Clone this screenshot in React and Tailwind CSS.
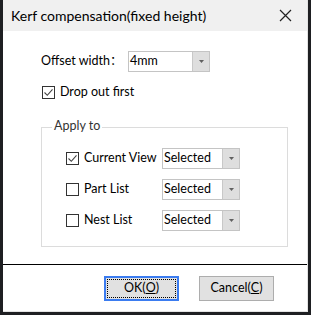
import React from "react";

const font = { fontFamily: 'Lato, "Noto Sans CJK SC", sans-serif' };

function Check({ checked }) {
  return (
    <div className="w-[13px] h-[13px] border border-[#333333] bg-white flex items-center justify-center shrink-0">
      {checked && (
        <svg width="11" height="11" viewBox="0 0 11 11">
          <path d="M1.5 5.5 L4.3 8.3 L9.5 2.3" fill="none" stroke="#444444" strokeWidth="1.1" />
        </svg>
      )}
    </div>
  );
}

function Combo({ value, w }) {
  return (
    <div className={`${w} h-[21px] border border-[#c4c4c4] bg-white flex shrink-0`}>
      <div className="flex-1 flex items-center pl-[1px] text-[12.5px] text-black leading-none whitespace-nowrap">{value}</div>
      <div className="w-[17px] bg-[#dedede] border-l border-[#c8c8c8] flex items-center justify-center">
        <svg width="5" height="3" viewBox="0 0 5 3">
          <path d="M0 0 L5 0 L2.5 3 Z" fill="#606060" />
        </svg>
      </div>
    </div>
  );
}

function Row({ label, checked }) {
  return (
    <div className="flex items-center h-[21px]">
      <div className="w-[96px] flex items-center gap-[5px] shrink-0">
        <Check checked={checked} />
        <span className="text-[12.5px] text-black leading-none whitespace-nowrap">{label}</span>
      </div>
      <Combo value="Selected" w="w-[78px]" />
    </div>
  );
}

export default function App() {
  return (
    <div style={font} className="w-[311px] h-[315px] bg-[#1e1f22] pl-[3px] pr-[3px] pb-[3px] flex flex-col">
      <div className="flex-1 bg-white flex flex-col border-r border-b border-[#e3e3e3]">
        <div className="h-[31px] bg-[#f0f0f0] flex items-center justify-between pl-[8px] pr-[15px]">
          <span className="text-[14px] text-black leading-none whitespace-nowrap">Kerf compensation(fixed height)</span>
          <svg width="13" height="13" viewBox="0 0 13 13">
            <path d="M1 1 L12 12 M12 1 L1 12" stroke="#222" strokeWidth="1.2" />
          </svg>
        </div>
        <div className="pl-[38px] pt-[20px]">
          <div className="flex items-center h-[21px]">
            <span className="w-[87px] shrink-0 text-[12.5px] text-black leading-none whitespace-nowrap">Offset width：</span>
            <Combo value="4mm" w="w-[82px]" />
          </div>
          <div className="flex items-center gap-[5px] mt-[14px] pl-[1px] h-[13px]">
            <Check checked />
            <span className="text-[12.5px] text-black leading-none whitespace-nowrap">Drop out first</span>
          </div>
          <div className="relative mt-[28px] w-[247px] h-[120px] border border-[#dcdcdc]">
            <span className="absolute left-[10px] top-[-8px] bg-white px-[2px] text-[12.5px] text-[#333] leading-none whitespace-nowrap">Apply to</span>
            <div className="pl-[24px] pt-[20px] flex flex-col gap-[10px]">
              <Row label="Current View" checked />
              <Row label="Part List" />
              <Row label="Nest List" />
            </div>
          </div>
        </div>
        <div className="mt-[17px] h-[1px] bg-black" />
        <div className="flex pl-[101px] gap-[20px] mt-[11px]">
          <div className="w-[75px] h-[25px] border-2 border-[#3b7cf0] bg-[#e1e1e1] p-[1px]">
            <div className="w-full h-full border border-dotted border-black flex items-center justify-center text-[12.5px] text-black leading-none">
              OK(<span className="underline">O</span>)
            </div>
          </div>
          <div className="w-[75px] h-[25px] border border-[#adadad] bg-[#e1e1e1] flex items-center justify-center text-[12.5px] text-black leading-none">
            Cancel(<span className="underline">C</span>)
          </div>
        </div>
      </div>
    </div>
  );
}
